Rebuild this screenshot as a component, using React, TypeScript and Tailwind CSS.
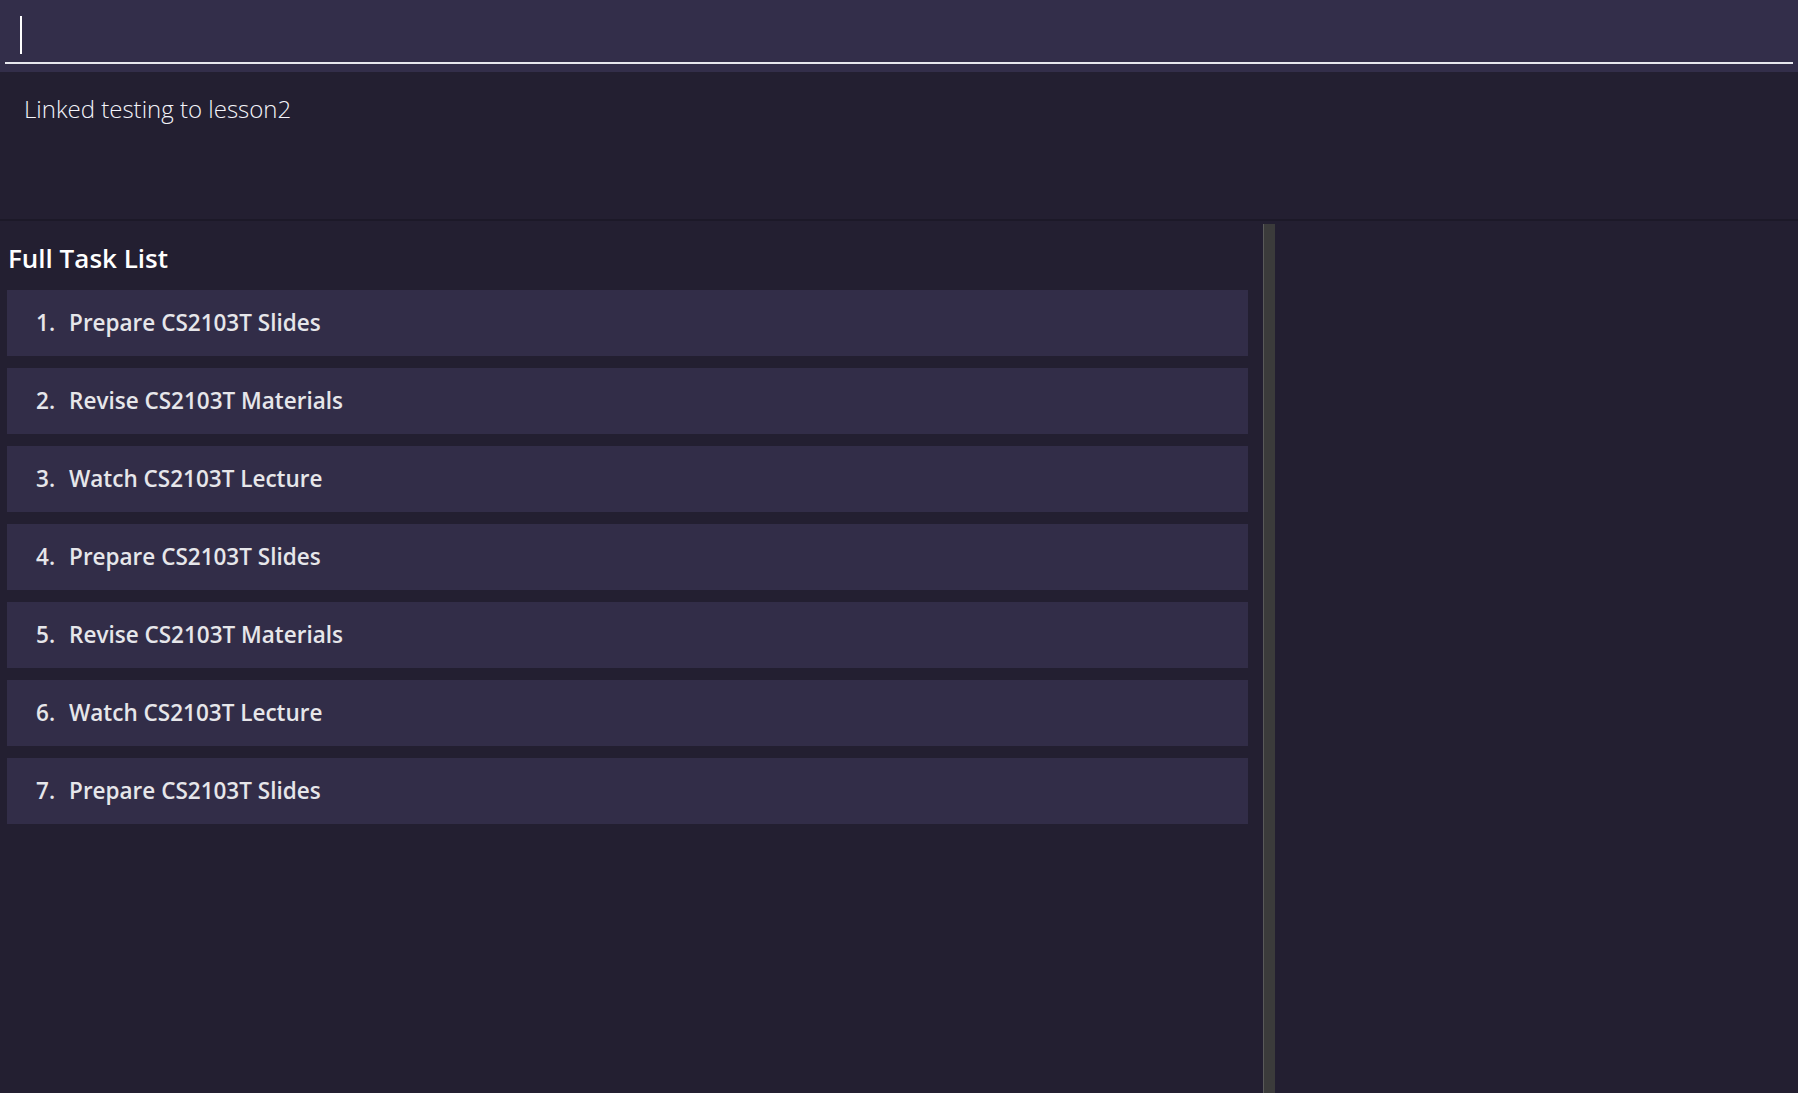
import React from "react";

const tasks = [
  "Prepare CS2103T Slides",
  "Revise CS2103T Materials",
  "Watch CS2103T Lecture",
  "Prepare CS2103T Slides",
  "Revise CS2103T Materials",
  "Watch CS2103T Lecture",
  "Prepare CS2103T Slides",
];

const App = () => {
  return (
    <div
      className="w-full h-[1093px] flex flex-col bg-[#231f31] overflow-hidden"
      style={{ fontFamily: '"Open Sans", "Noto Sans", sans-serif' }}
    >
      {/* Command box */}
      <div className="h-[72px] bg-[#332e4a] px-[5px] pt-[16px]">
        <div className="h-[48px] border-b-2 border-[#e8e8ee] pl-[15px]">
          <div className="w-[2px] h-[38px] bg-white" />
        </div>
      </div>

      {/* Result display */}
      <div className="h-[149px] border-b-2 border-[#1c1928] px-[24px] pt-[19px]">
        <p className="text-[24px] font-light text-[#f4f4fa]">Linked testing to lesson2</p>
      </div>

      {/* Main split */}
      <div className="flex flex-1 min-h-0">
        <div className="w-[1263px] pl-[7px] pr-[15px] pt-[19px]">
          <h2 className="text-[26px] font-semibold text-white leading-[36px] pl-[1px] mb-[14px]">
            Full Task List
          </h2>
          <div className="flex flex-col gap-[12px]">
            {tasks.map((t, i) => (
              <div key={i} className="h-[66px] bg-[#322d48] flex items-center pl-[29px] text-[22.5px] font-semibold text-[#e6e6ea]">
                <span>{i + 1}.</span>
                <span className="ml-[14px]">{t}</span>
              </div>
            ))}
          </div>
        </div>
        <div className="w-[12px] bg-[#3b3b3b] border-l border-[#5a5a5a] mt-[3px]" />
        <div className="flex-1" />
      </div>
    </div>
  );
};

export default App;
